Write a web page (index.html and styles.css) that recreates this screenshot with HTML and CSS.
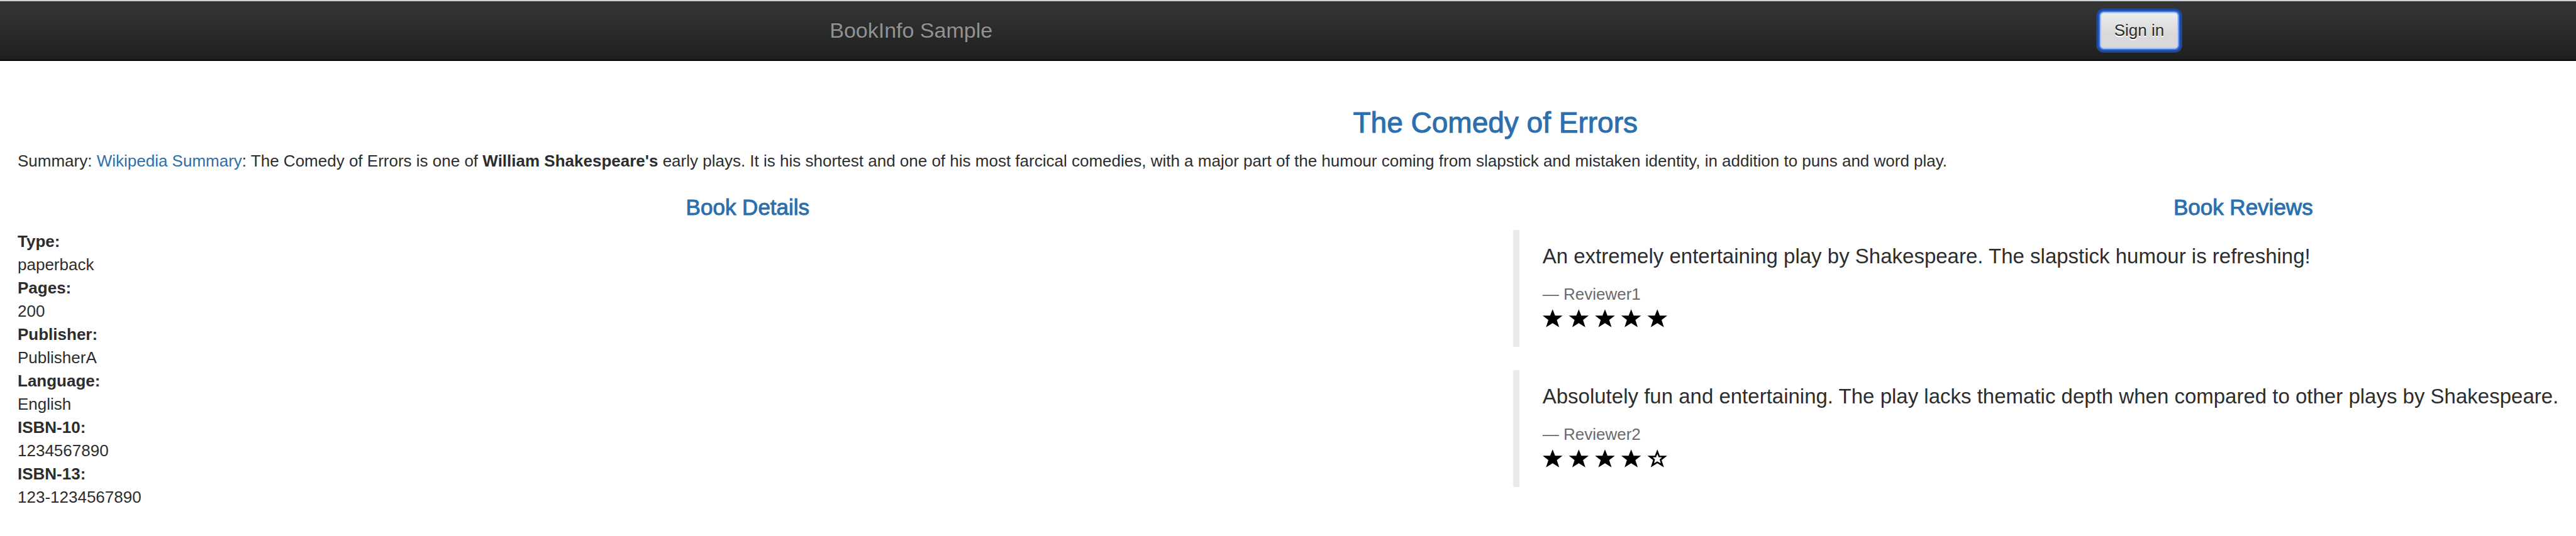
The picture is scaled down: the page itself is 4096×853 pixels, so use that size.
FILE: index.html
```html
<!DOCTYPE html>
<html lang="en">
<head>
<meta charset="utf-8">
<title>Simple Bookstore App</title>
<link rel="stylesheet" href="styles.css">
</head>
<body>
<nav class="navbar">
  <div class="container">
    <a class="brand" href="#">BookInfo Sample</a>
    <button class="btn" type="button">Sign in</button>
  </div>
</nav>
<main>
  <section>
    <h3 class="title">The Comedy of Errors</h3>
    <p class="summary">Summary: <a href="#">Wikipedia Summary</a>: The Comedy of Errors is one of <b>William Shakespeare's</b> early plays. It is his shortest and one of his most farcical comedies, with a major part of the humour coming from slapstick and mistaken identity, in addition to puns and word play.</p>
  </section>
  <div class="row">
    <section>
      <h4 class="subtitle">Book Details</h4>
      <dl class="details">
        <dt>Type:</dt><dd>paperback</dd>
        <dt>Pages:</dt><dd>200</dd>
        <dt>Publisher:</dt><dd>PublisherA</dd>
        <dt>Language:</dt><dd>English</dd>
        <dt>ISBN-10:</dt><dd>1234567890</dd>
        <dt>ISBN-13:</dt><dd>123-1234567890</dd>
      </dl>
    </section>
    <section>
      <h4 class="subtitle subtitle-reviews">Book Reviews</h4>
      <blockquote class="review">
        <p>An extremely entertaining play by Shakespeare. The slapstick humour is refreshing!</p>
        <small>— Reviewer1</small>
        <div class="rating">
          <svg class="stars" viewBox="0 0 214 31" role="img" aria-label="5 of 5 stars">
            <defs><path id="star" d="M17 0L21.3 11H34L24.3 18.500L28.300 31L17 24L5.700 31L9.700 18.500L0 11H12.700Z"/></defs>
            <use href="#star"/><use href="#star" x="45"/><use href="#star" x="90"/><use href="#star" x="135"/><use href="#star" x="180"/>
          </svg>
        </div>
      </blockquote>
      <blockquote class="review">
        <p>Absolutely fun and entertaining. The play lacks thematic depth when compared to other plays by Shakespeare.</p>
        <small>— Reviewer2</small>
        <div class="rating">
          <svg class="stars" viewBox="0 0 214 31" role="img" aria-label="4 of 5 stars">
            <use href="#star"/><use href="#star" x="45"/><use href="#star" x="90"/><use href="#star" x="135"/>
            <path fill-rule="evenodd" transform="translate(180 0)" d="M17 0L21.300 11H34L24.300 18.500L28.300 31L17 24L5.700 31L9.700 18.500L0 11H12.700ZM17 8L14.700 13.700H9L13 17.500L11.200 24L17 20.500L22.800 24L21 17.500L25 13.700H19.300Z"/>
          </svg>
        </div>
      </blockquote>
    </section>
  </div>
</main>
</body>
</html>
```
FILE: styles.css
```css
* { box-sizing: border-box; }

body {
  margin: 0;
  background: #fff;
  color: #2d2d2d;
  font: 26px/37px "Liberation Sans", Arial, sans-serif;
}

a { color: #2b6fae; text-decoration: none; }

/* Headings and the navbar content centre on the line between the columns */
.navbar {
  padding-left: 16.1%;
  border-top: 2px solid #ccd3dc;
  border-bottom: 2px solid #060606;
  background: linear-gradient(#363636, #1f1f1f);
  margin-bottom: 74px;
}

.container {
  display: flex;
  align-items: center;
  justify-content: space-between;
  max-width: 2173px;
  height: 93px;
  margin: 0 auto;
  padding-left: 28px;
}

.brand {
  color: #929292;
  font-size: 34px;
  text-shadow: 0 -1px 0 rgba(0, 0, 0, .3);
}

.btn {
  padding: 9px 21px;
  border: 2px solid #a9bff0;
  border-radius: 6px;
  background: linear-gradient(#ededed, #d9d9d9 60%);
  box-shadow: 0 0 0 2px #3c6fd6, 0 0 0 5px #1c4aa3, 0 0 0 6px #28406e;
  color: #2d2d2d;
  font: inherit;
  text-shadow: 0 2px 0 #fff;
}

.title, .subtitle {
  margin: 0;
  color: #2b6fae;
  font-weight: 400;
  text-align: center;
  -webkit-text-stroke: 1px #2b6fae;
}

.title {
  margin-bottom: 18px;
  padding-left: 16.1%;
  font-size: 46px;
  line-height: 49px;
}

.subtitle { font-size: 35px; line-height: 37px; margin-bottom: 18px; }
.subtitle-reviews { padding-left: 38.4%; }

.summary { margin: 0 28px 36px; }

.row { display: grid; grid-template-columns: 58.05% 41.95%; }

.details { margin: 0 28px; }
.details dt { font-weight: 700; }
.details dd { margin: 0; }

.review {
  margin: 0 0 37px 28px;
  padding: 19px 0 19px 37px;
  border-left: 10px solid #eaeaea;
}

.review p { margin: 0 0 19px; font-size: 33px; line-height: 46px; }
.review small { display: block; color: #6b6b6b; font-size: 26px; }

.rating { height: 46px; padding-top: 5px; }
.stars { display: block; width: 198px; height: 29px; fill: #000; }
```
